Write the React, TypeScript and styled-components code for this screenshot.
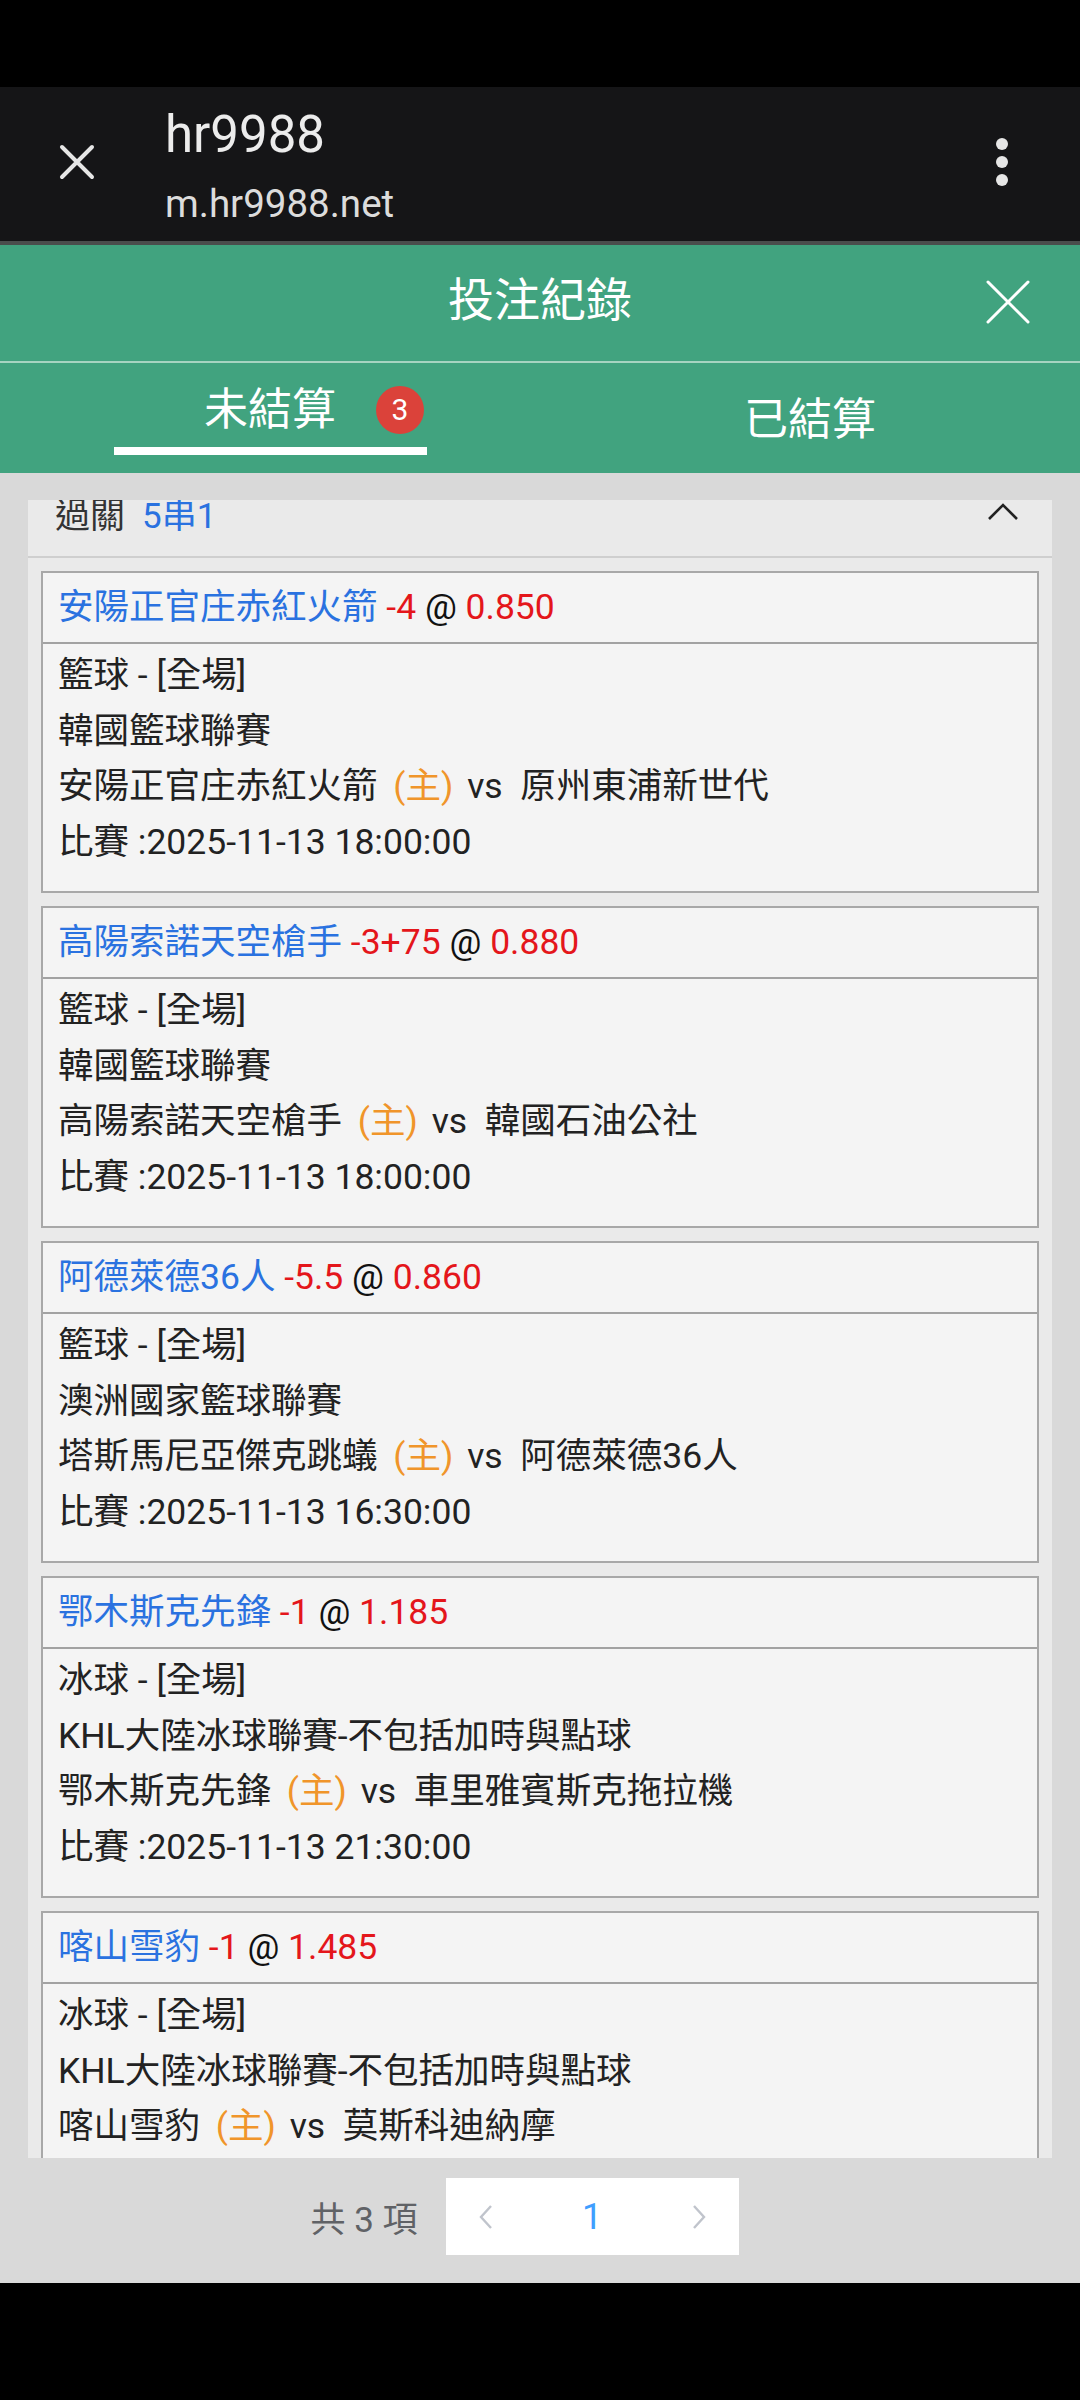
import { useLayoutEffect, useRef } from 'react';
import styled, { createGlobalStyle } from 'styled-components';

// Colours
const colors = {
  green: '#41a37f',
  blue: '#2a72e0',
  red: '#e4161b',
  orange: '#f0952a',
  text: '#222222',
  pageBg: '#d9d9d9',
  panelBg: '#eaeaea',
  cardBg: '#f4f4f4',
  cardBorder: '#a8a8a8'
};

const GlobalStyle = createGlobalStyle`
  html, body {
    margin: 0;
    padding: 0;
    background: #000;
  }
  body {
    font-family: Roboto, "Noto Sans CJK TC", "Noto Sans", sans-serif;
  }
  * {
    box-sizing: border-box;
  }
`;

interface Bet {
  team: string;
  handicap: string;
  odds: string;
  sport: string;
  league: string;
  home: string;
  away: string;
  time: string;
}

const bets: Bet[] = [
  {
    team: '安陽正官庄赤紅火箭',
    handicap: '-4',
    odds: '0.850',
    sport: '籃球',
    league: '韓國籃球聯賽',
    home: '安陽正官庄赤紅火箭',
    away: '原州東浦新世代',
    time: '2025-11-13 18:00:00'
  },
  {
    team: '高陽索諾天空槍手',
    handicap: '-3+75',
    odds: '0.880',
    sport: '籃球',
    league: '韓國籃球聯賽',
    home: '高陽索諾天空槍手',
    away: '韓國石油公社',
    time: '2025-11-13 18:00:00'
  },
  {
    team: '阿德萊德36人',
    handicap: '-5.5',
    odds: '0.860',
    sport: '籃球',
    league: '澳洲國家籃球聯賽',
    home: '塔斯馬尼亞傑克跳蟻',
    away: '阿德萊德36人',
    time: '2025-11-13 16:30:00'
  },
  {
    team: '鄂木斯克先鋒',
    handicap: '-1',
    odds: '1.185',
    sport: '冰球',
    league: 'KHL大陸冰球聯賽-不包括加時與點球',
    home: '鄂木斯克先鋒',
    away: '車里雅賓斯克拖拉機',
    time: '2025-11-13 21:30:00'
  },
  {
    team: '喀山雪豹',
    handicap: '-1',
    odds: '1.485',
    sport: '冰球',
    league: 'KHL大陸冰球聯賽-不包括加時與點球',
    home: '喀山雪豹',
    away: '莫斯科迪納摩',
    time: '2025-11-13 19:00:00'
  }
];

const Page = styled.div`
  width: 1080px;
  height: 2400px;
  display: flex;
  flex-direction: column;
  background: #000;
  overflow: hidden;
`;

const StatusBar = styled.div`
  height: 87px;
  flex: none;
  background: #000;
`;

// Browser bar
const BrowserBar = styled.div`
  height: 158px;
  flex: none;
  display: flex;
  align-items: center;
  padding: 0 72px 4px 58px;
  background: #151517;
  border-bottom: 4px solid #4a4d4c;
`;

const BrowserTitles = styled.div`
  flex: 1;
  display: flex;
  flex-direction: column;
  gap: 16px;
  margin-left: 69px;
  align-self: flex-start;
  padding-top: 18px;
`;

const SiteName = styled.div`
  font-size: 51px;
  line-height: 60px;
  color: #ececec;
`;

const SiteUrl = styled.div`
  font-size: 38.5px;
  line-height: 46px;
  color: #dcdcdc;
`;

const Kebab = styled.div`
  display: flex;
  flex-direction: column;
  gap: 6px;
`;

const Dot = styled.span`
  width: 12px;
  height: 12px;
  border-radius: 50%;
  background: #e6e6e6;
`;

// Green header
const Header = styled.div`
  height: 118px;
  flex: none;
  display: grid;
  grid-template-columns: 1fr auto 1fr;
  align-items: center;
  padding-bottom: 6px;
  background: ${colors.green};
  border-bottom: 2px solid #a6d4c1;
`;

const HeaderTitle = styled.div`
  grid-column: 2;
  font-size: 46px;
  line-height: 60px;
  color: #fff;
`;

const CloseButton = styled.div`
  grid-column: 3;
  justify-self: end;
  margin-right: 49px;
  margin-top: 4px;
  display: flex;
`;

// Tabs
const Tabs = styled.div`
  height: 110px;
  flex: none;
  display: flex;
  background: ${colors.green};
`;

const Tab = styled.div`
  flex: 1;
  display: flex;
  flex-direction: column;
  align-items: center;
  justify-content: center;
  gap: 12px;
  padding-top: 4px;
`;

const TabLabel = styled.div`
  position: relative;
  font-size: 44px;
  line-height: 50px;
  color: #fff;
`;

const Badge = styled.span`
  position: absolute;
  left: calc(100% + 40px);
  top: 50%;
  transform: translateY(-50%);
  width: 48px;
  height: 48px;
  border-radius: 50%;
  background: #db423a;
  color: #fff;
  font-size: 30px;
  line-height: 48px;
  text-align: center;
`;

const TabLine = styled.div<{ $active: boolean }>`
  width: 313px;
  height: 8px;
  background: #fff;
  display: ${(p) => (p.$active ? 'block' : 'none')};
`;

// Content
const Content = styled.div`
  flex: 1;
  display: flex;
  flex-direction: column;
  background: ${colors.pageBg};
  padding-top: 27px;
`;

const ScrollBox = styled.div`
  height: 1658px;
  flex: none;
  overflow: hidden;
  padding: 0 28px;
`;

const Panel = styled.div`
  background: ${colors.panelBg};
`;

const PanelHeader = styled.div`
  height: 90px;
  display: flex;
  align-items: center;
  padding: 0 33px 0 27px;
  border-bottom: 2px solid #cfcfcf;
  font-size: 35px;
  color: #333;
`;

const ComboType = styled.span`
  color: ${colors.blue};
  margin-left: 17px;
  flex: 1;
`;

const CardList = styled.div`
  display: flex;
  flex-direction: column;
  gap: 13px;
  padding: 13px;
`;

const Card = styled.div`
  background: ${colors.cardBg};
  border: 2px solid ${colors.cardBorder};
`;

const CardTitle = styled.div`
  height: 71px;
  padding: 0 15px;
  border-bottom: 2px solid #a2a2a2;
  font-size: 35.5px;
  line-height: 69px;
  color: #111;
  white-space: pre;
`;

const Team = styled.span`
  color: ${colors.blue};
`;

const Red = styled.span`
  color: ${colors.red};
`;

const CardBody = styled.div`
  padding: 4px 15px 21px;
  font-size: 35.5px;
  line-height: 55.5px;
  color: ${colors.text};
`;

const Line = styled.div`
  white-space: pre;
`;

const HomeTag = styled.span`
  color: ${colors.orange};
  margin: 0 5px 0 7px;
`;

// Pagination
const Pager = styled.div`
  height: 123px;
  flex: none;
  display: flex;
  justify-content: center;
  align-items: flex-start;
  padding: 20px 31px 0 0;
  gap: 28px;
`;

const Total = styled.div`
  height: 77px;
  display: flex;
  align-items: center;
  font-size: 35px;
  color: #606266;
  white-space: pre;
`;

const PagerBox = styled.div`
  width: 293px;
  height: 77px;
  display: flex;
  align-items: center;
  justify-content: space-between;
  background: #fff;
`;

const PagerCell = styled.div`
  width: 80px;
  height: 77px;
  display: flex;
  align-items: center;
  justify-content: center;
`;

const PageNumber = styled(PagerCell)`
  font-size: 36px;
  color: #409eff;
`;

const BottomNav = styled.div`
  height: 117px;
  flex: none;
  background: #000;
`;

const CrossIcon = ({ size, stroke, color }: { size: number; stroke: number; color: string }) => (
  <svg width={size} height={size} viewBox={`0 0 ${size} ${size}`}>
    <path
      d={`M${stroke} ${stroke}L${size - stroke} ${size - stroke}M${size - stroke} ${stroke}L${stroke} ${size - stroke}`}
      stroke={color}
      strokeWidth={stroke}
      strokeLinecap='round'
      fill='none'
    />
  </svg>
);

const ChevronUp = () => (
  <svg width='32' height='18' viewBox='0 0 32 18'>
    <path d='M2 16L16 2L30 16' stroke='#222' strokeWidth='2.6' fill='none' />
  </svg>
);

const PagerArrow = ({ dir }: { dir: 'left' | 'right' }) => (
  <svg width='14' height='26' viewBox='0 0 14 26'>
    <path
      d={dir === 'left' ? 'M12 2L2 13L12 24' : 'M2 2L12 13L2 24'}
      stroke='#c0c4cc'
      strokeWidth='2.4'
      fill='none'
    />
  </svg>
);

const BetCard = ({ bet }: { bet: Bet }) => (
  <Card>
    <CardTitle>
      <Team>{bet.team}</Team>{' '}<Red>{bet.handicap}</Red>{' @ '}<Red>{bet.odds}</Red>
    </CardTitle>
    <CardBody>
      <Line>{bet.sport} - [全場]</Line>
      <Line>{bet.league}</Line>
      <Line>
        {bet.home}{' '}<HomeTag>(主)</HomeTag>{' vs  '}{bet.away}
      </Line>
      <Line>比賽 :{bet.time}</Line>
    </CardBody>
  </Card>
);

export default function App() {
  const scrollRef = useRef<HTMLDivElement>(null);

  // the list in the reference is scrolled down a little
  useLayoutEffect(() => {
    if (scrollRef.current) {
      scrollRef.current.scrollTop = 32;
    }
  }, []);

  return (
    <Page>
      <GlobalStyle />
      <StatusBar />
      <BrowserBar>
        <CrossIcon size={38} stroke={4} color='#e6e6e6' />
        <BrowserTitles>
          <SiteName>hr9988</SiteName>
          <SiteUrl>m.hr9988.net</SiteUrl>
        </BrowserTitles>
        <Kebab>
          <Dot />
          <Dot />
          <Dot />
        </Kebab>
      </BrowserBar>
      <Header>
        <HeaderTitle>投注紀錄</HeaderTitle>
        <CloseButton>
          <CrossIcon size={46} stroke={3} color='#fff' />
        </CloseButton>
      </Header>
      <Tabs>
        <Tab>
          <TabLabel>
            未結算
            <Badge>3</Badge>
          </TabLabel>
          <TabLine $active />
        </Tab>
        <Tab>
          <TabLabel>已結算</TabLabel>
          <TabLine $active={false} />
        </Tab>
      </Tabs>
      <Content>
        <ScrollBox ref={scrollRef}>
          <Panel>
            <PanelHeader>
              過關
              <ComboType>5串1</ComboType>
              <ChevronUp />
            </PanelHeader>
            <CardList>
              {bets.map((bet) => (
                <BetCard key={bet.team} bet={bet} />
              ))}
            </CardList>
          </Panel>
        </ScrollBox>
        <Pager>
          <Total>共 3 項</Total>
          <PagerBox>
            <PagerCell>
              <PagerArrow dir='left' />
            </PagerCell>
            <PageNumber>1</PageNumber>
            <PagerCell>
              <PagerArrow dir='right' />
            </PagerCell>
          </PagerBox>
        </Pager>
      </Content>
      <BottomNav />
    </Page>
  );
}
